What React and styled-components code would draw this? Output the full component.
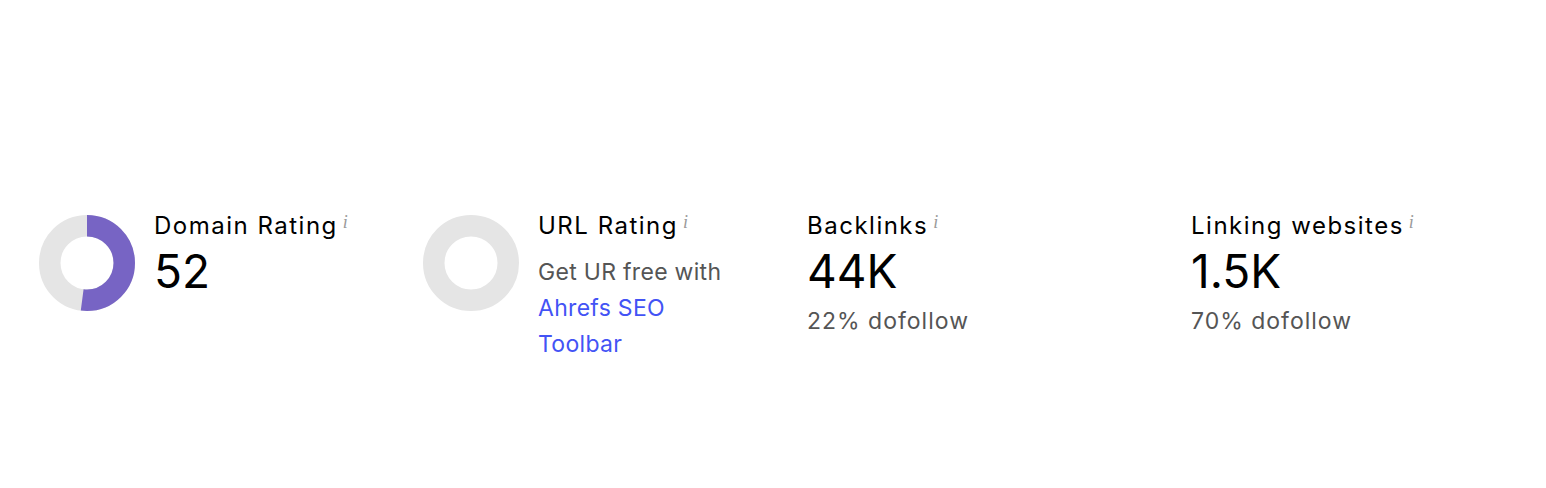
import React from "react";
import styled, { createGlobalStyle } from "styled-components";

const GlobalStyle = createGlobalStyle`
	body {
		margin: 0;
		background: #fff;
		font-family: Inter, "Noto Sans", sans-serif;
		color: #000;
	}
`;

const Page = styled.div`
	height: 488px;
	padding: 210px 0 0 39px;
	box-sizing: border-box;
`;

const Row = styled.div`
	display: grid;
	grid-template-columns: repeat(4, 384px);
`;

const Metric = styled.div`
	display: flex;
	align-items: flex-start;
	gap: 19px;
`;

const Donut = styled.svg`
	flex: none;
	width: 96px;
	height: 96px;
	margin-top: 5px;
`;

const Info = styled.div`
	display: flex;
	flex-direction: column;
`;

const Title = styled.div`
	font-size: 24px;
	line-height: 32px;
	letter-spacing: 1.5px;
	white-space: nowrap;
`;

const Hint = styled.sup`
	font-family: "Liberation Serif", serif;
	font-style: italic;
	font-size: 18px;
	letter-spacing: 0;
	color: #9a9a9a;
	margin-left: 5px;
	vertical-align: 6px;
	line-height: 0;
`;

const Value = styled.div`
	font-size: 46px;
	line-height: 54px;
	letter-spacing: 0;
	margin-top: 2px;
`;

const Sub = styled.div`
	font-size: 23px;
	line-height: 36px;
	color: #555;
	letter-spacing: ${(p) => (p.$wide ? "1px" : "0.3px")};
	margin-top: ${(p) => p.$offset || 0}px;
`;

const Link = styled.a`
	color: #4353f5;
	text-decoration: none;
`;

const Ring = ({ value }) => {
	const r = 37.25;
	const c = 2 * Math.PI * r;
	return (
		<Donut viewBox="0 0 96 96">
			<circle cx="48" cy="48" r={r} fill="none" stroke="#e5e5e5" strokeWidth="21.5" />
			{value > 0 && (
				<circle
					cx="48"
					cy="48"
					r={r}
					fill="none"
					stroke="#7764c4"
					strokeWidth="21.5"
					strokeDasharray={`${(c * value) / 100} ${c}`}
					transform="rotate(-90 48 48)"
				/>
			)}
		</Donut>
	);
};

const App = () => (
	<Page>
		<GlobalStyle />
		<Row>
			<Metric>
				<Ring value={52} />
				<Info>
					<Title>
						Domain Rating<Hint>i</Hint>
					</Title>
					<Value>52</Value>
				</Info>
			</Metric>
			<Metric>
				<Ring value={0} />
				<Info>
					<Title>
						URL Rating<Hint>i</Hint>
					</Title>
					<Sub $offset={12}>
						Get UR free with
						<br />
						<Link href="#">
							Ahrefs SEO
							<br />
							Toolbar
						</Link>
					</Sub>
				</Info>
			</Metric>
			<Info>
				<Title>
					Backlinks<Hint>i</Hint>
				</Title>
				<Value>44K</Value>
				<Sub $wide $offset={5}>22% dofollow</Sub>
			</Info>
			<Info>
				<Title>
					Linking websites<Hint>i</Hint>
				</Title>
				<Value>1.5K</Value>
				<Sub $wide $offset={5}>70% dofollow</Sub>
			</Info>
		</Row>
	</Page>
);

export default App;
